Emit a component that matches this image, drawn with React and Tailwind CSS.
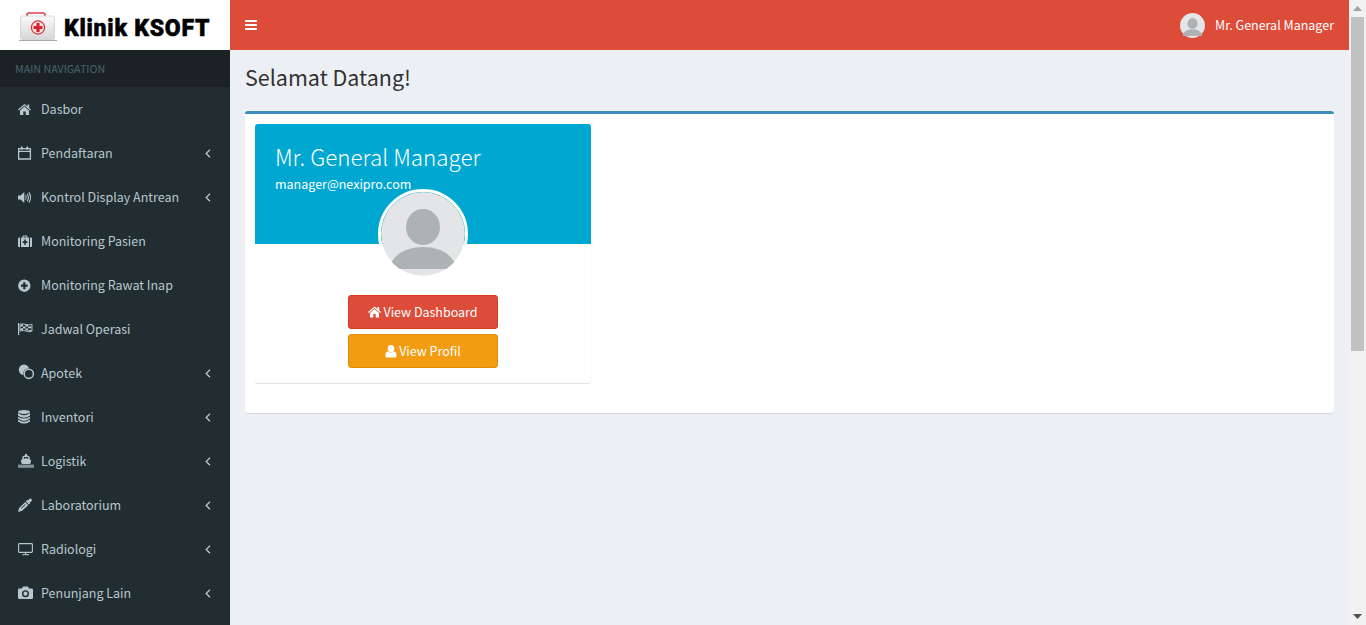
import React from "react";

const FONT = { fontFamily: '"Noto Sans CJK SC", "Noto Sans", sans-serif' };
const BG = "#222d32";

function Box({ children, w = 18, h = 18, className = "" }) {
  return (
    <svg viewBox={`0 0 ${w} ${h}`} width={w} height={h} className={`block ${className}`} fill="currentColor">
      {children}
    </svg>
  );
}

const HomeG = () => (
  <>
    <path d="M0 9.6 L6.5 4 L9.5 6.6 V4.6 H11.2 V8 L13 9.6 L12.2 10.5 L6.5 5.6 L0.8 10.5 Z" />
    <path d="M2 10.4 L6.5 6.6 L11 10.4 V15 H7.7 V11.6 H5.3 V15 H2 Z" />
  </>
);
const CalendarI = () => (
  <Box>
    <path d="M0.6 4.6 H12.4 V15 H0.6 Z M0.6 7.4 H12.4" fill="none" stroke="currentColor" strokeWidth="1.3" />
    <path d="M2.8 2.5 H4.6 V5.8 H2.8 Z M8.4 2.5 H10.2 V5.8 H8.4 Z" />
  </Box>
);
const VolumeI = () => (
  <Box>
    <path d="M0 7.5 H2.6 L6.3 4 V15 L2.6 11.5 H0 Z" />
    <path d="M7.6 7.3 Q9 9.5 7.6 11.7 M9.2 5.8 Q11.6 9.5 9.2 13.2 M10.9 4.4 Q14.2 9.5 10.9 14.6" fill="none" stroke="currentColor" strokeWidth="1.1" />
  </Box>
);
const MedkitI = () => (
  <Box>
    <path d="M0 6.5 Q0 5.5 1 5.5 H2 V15 H1 Q0 15 0 14 Z M12 5.5 H13 Q14 5.5 14 6.5 V14 Q14 15 13 15 H12 Z" />
    <path fillRule="evenodd" d="M3 5.5 H4.6 V4.2 Q4.6 3.4 5.4 3.4 H8.6 Q9.4 3.4 9.4 4.2 V5.5 H11 V15 H3 Z M5.6 5.5 H8.4 V4.4 H5.6 Z M6.2 7.6 V9.3 H4.6 V11 H6.2 V12.7 H7.8 V11 H9.4 V9.3 H7.8 V7.6 Z" />
  </Box>
);
const PlusCircleI = () => (
  <Box>
    <path fillRule="evenodd" d="M6.3 3.5 A6.2 6.2 0 1 1 6.3 15.9 A6.2 6.2 0 1 1 6.3 3.5 Z M5.2 6.2 V8.6 H3 V10.8 H5.2 V13.2 H7.4 V10.8 H9.6 V8.6 H7.4 V6.2 Z" />
  </Box>
);
const FlagI = () => (
  <Box>
    <rect x="0" y="3" width="1.2" height="12" />
    <path d="M2 4.3 Q5 3.2 8 4.6 Q11 5.6 14 4.3 V11.2 Q11 12.4 8 11 Q5 9.8 2 11.2 Z" fill="none" stroke="currentColor" strokeWidth="0.9" />
    <path d="M2.4 4.6 H5 V6.4 H2.4 Z M7.5 4.6 H10 V6.6 H7.5 Z M5 6.4 H7.5 V8.4 H5 Z M10 6.4 H13.6 V8.2 H10 Z M2.4 8.2 H5 V10.3 H2.4 Z M7.5 8.4 H10 V10.6 H7.5 Z M10.5 10 H13.6 V11 H10.5 Z" />
  </Box>
);
const PillsI = () => (
  <Box h={18}>
    <circle cx="6" cy="5.8" r="5.2" />
    <circle cx="10.8" cy="9.8" r="5.6" fill={BG} />
    <circle cx="10.8" cy="9.8" r="4.6" fill="none" stroke="currentColor" strokeWidth="1.5" />
  </Box>
);
const DatabaseI = () => (
  <Box>
    <ellipse cx="6" cy="3.9" rx="6" ry="2" />
    <path d="M0 5 Q3 7.2 6 7.2 Q9 7.2 12 5 V7.4 Q9 9.8 6 9.8 Q3 9.8 0 7.4 Z" />
    <path d="M0 8.4 Q3 10.6 6 10.6 Q9 10.6 12 8.4 V10.6 Q9 13 6 13 Q3 13 0 10.6 Z" />
    <path d="M0 11.6 Q3 13.8 6 13.8 Q9 13.8 12 11.6 V13.4 Q9 15.6 6 15.6 Q3 15.6 0 13.4 Z" />
  </Box>
);
const ShipI = () => (
  <Box>
    <path fillRule="evenodd" d="M7 2 H9 V3.4 Q11.8 3.6 11.8 6.4 V7.6 L13.2 8.6 L12.2 12 H3.8 L2.8 8.6 L4.2 7.6 V6.4 Q4.2 3.6 7 3.4 Z M5.8 5 V7 L8 6 L10.2 7 V5 Z" />
    <rect x="0" y="12.6" width="16" height="3.2" opacity="0.65" />
  </Box>
);
const DropperI = () => (
  <Box>
    <path d="M10 4.6 L11.2 3 Q12.4 1.8 13.5 3 Q14.6 4.2 13.2 5.4 L11.6 6.6 L12.2 7.4 L11 8.4 L7.8 5.2 L9 4 Z" />
    <path d="M7.2 5.9 L10.3 9 L4.4 14.6 Q3 15.6 2 15.2 L0.8 16 L0 15.2 L0.8 14 Q0.4 13 1.4 11.7 Z M7.2 8.1 L3 12.3 L3.5 12.8 L7.7 8.6 Z" fillRule="evenodd" />
  </Box>
);
const DesktopI = () => (
  <Box>
    <rect x="0.6" y="3.6" width="13.8" height="8.8" rx="0.8" fill="none" stroke="currentColor" strokeWidth="1.1" />
    <rect x="7" y="12.6" width="1.2" height="1.8" />
    <rect x="4.2" y="14.2" width="6.8" height="1" />
  </Box>
);
const CameraI = () => (
  <Box>
    <path fillRule="evenodd" d="M1.2 4.6 H4 L5 2.4 H10 L11 4.6 H13.8 Q15 4.6 15 5.8 V13.8 Q15 15 13.8 15 H1.2 Q0 15 0 13.8 V5.8 Q0 4.6 1.2 4.6 Z M7.5 6.2 A3.5 3.5 0 1 0 7.5 13.2 A3.5 3.5 0 1 0 7.5 6.2 Z M7.5 7.6 A2.1 2.1 0 1 1 7.5 11.8 A2.1 2.1 0 1 1 7.5 7.6 Z" />
  </Box>
);

const items = [
  { label: "Dasbor", Icon: () => <Box><HomeG /></Box> },
  { label: "Pendaftaran", Icon: CalendarI, more: true },
  { label: "Kontrol Display Antrean", Icon: VolumeI, more: true },
  { label: "Monitoring Pasien", Icon: MedkitI },
  { label: "Monitoring Rawat Inap", Icon: PlusCircleI },
  { label: "Jadwal Operasi", Icon: FlagI },
  { label: "Apotek", Icon: PillsI, more: true },
  { label: "Inventori", Icon: DatabaseI, more: true },
  { label: "Logistik", Icon: ShipI, more: true },
  { label: "Laboratorium", Icon: DropperI, more: true },
  { label: "Radiologi", Icon: DesktopI, more: true },
  { label: "Penunjang Lain", Icon: CameraI, more: true },
];

function Avatar({ className }) {
  return (
    <svg viewBox="0 0 84 84" className={className}>
      <circle cx="42" cy="42" r="42" fill="#e3e5e6" />
      <ellipse cx="42" cy="35" rx="17" ry="18" fill="#adb3b4" />
      <path d="M10 72 C15 60 28 55 42 55 C56 55 69 60 74 72 L74 77 L10 77 Z" fill="#adb3b4" />
    </svg>
  );
}

function LogoCase() {
  return (
    <svg viewBox="0 0 38 30" width="38" height="30" className="block shrink-0 mt-[4px]">
      <defs>
        <linearGradient id="caseGrad" x1="0" y1="0" x2="0" y2="1">
          <stop offset="0" stopColor="#fafafa" />
          <stop offset="1" stopColor="#d6d6d6" />
        </linearGradient>
      </defs>
      <path d="M8 5 V2.6 Q8 1 10 1 H24 Q26 1 26 2.6 V5" fill="none" stroke="#d9434a" strokeWidth="1.6" />
      <rect x="1.5" y="4" width="34" height="23.5" rx="2" fill="url(#caseGrad)" stroke="#cfcfcf" strokeWidth="0.8" />
      <circle cx="19" cy="15.5" r="6.6" fill="#f6e4e4" stroke="#d8303a" strokeWidth="1.2" />
      <path d="M17.4 11 h3.2 v2.9 h2.9 v3.2 h-2.9 v2.9 h-3.2 v-2.9 h-2.9 v-3.2 h2.9 z" fill="#d8232e" />
      <rect x="0" y="28" width="38" height="1" fill="#a8a8a8" />
    </svg>
  );
}

function Scrollbar() {
  return (
    <div className="w-[17px] h-full shrink-0 bg-[#f1f1f1] flex flex-col items-center">
      <div className="h-[17px] w-full flex items-center justify-center">
        <svg width="9" height="5" viewBox="0 0 9 5" fill="#a3a3a3"><path d="M4.5 0 L9 5 H0 Z" /></svg>
      </div>
      <div className="h-[334px] w-[13px] bg-[#c1c1c1]" />
      <div className="flex-1" />
      <div className="h-[17px] w-full flex items-center justify-center">
        <svg width="9" height="5" viewBox="0 0 9 5" fill="#505050"><path d="M0 0 H9 L4.5 5 Z" /></svg>
      </div>
    </div>
  );
}

export default function App() {
  return (
    <div className="h-screen flex overflow-hidden bg-[#ecf0f5] text-[12.5px] text-[#333]" style={FONT}>
      <div className="flex-1 min-w-0 flex flex-col">
        <header className="flex h-[50px] shrink-0">
          <div className="w-[230px] h-[50px] bg-white flex items-center pl-[19px] gap-[7px]">
            <LogoCase />
            <span className="text-[23px] font-black text-black tracking-[0.75px] leading-none mt-[7px] whitespace-nowrap" style={{ fontFamily: 'Roboto, sans-serif', WebkitTextStroke: "0.5px #000" }}>Klinik KSOFT</span>
          </div>
          <div className="flex-1 bg-[#dd4b39] flex items-center justify-between px-[15px] text-white">
            <svg width="12" height="12" viewBox="0 0 12 12" fill="currentColor" className="block"><rect y="1" width="12" height="2" rx="0.5" /><rect y="5" width="12" height="2" rx="0.5" /><rect y="9" width="12" height="2" rx="0.5" /></svg>
            <div className="flex items-center gap-[10px]">
              <Avatar className="w-[25px] h-[25px]" />
              <span>Mr. General Manager</span>
            </div>
          </div>
        </header>
        <div className="flex flex-1 min-h-0">
          <aside className="w-[230px] bg-[#222d32] shrink-0">
            <div className="h-[37px] bg-[#1a2226] text-[#4b646f] text-[10.7px] px-[15px] pt-[2px] flex items-center uppercase">Main Navigation</div>
            <ul>
              {items.map(({ label, Icon, more }) => (
                <li key={label} className="h-[44px] flex items-center text-[#b8c7ce] pl-[18px] pr-[19px]">
                  <span className="w-[23px] shrink-0"><Icon /></span>
                  <span className="flex-1">{label}</span>
                  {more && (
                    <svg width="6" height="9" viewBox="0 0 6 9" fill="none" stroke="currentColor" strokeWidth="1.3" className="block"><path d="M5 0.8 L1.2 4.5 L5 8.2" /></svg>
                  )}
                </li>
              ))}
            </ul>
          </aside>
          <main className="flex-1 min-w-0 px-[15px] pt-[14px]">
            <h1 className="text-[21.5px] leading-[26px] font-normal text-[#333]">Selamat Datang!</h1>
            <section className="mt-[21px] bg-white border-t-[3px] border-[#3c8dbc] rounded-[3px] shadow-[0_1px_1px_rgba(0,0,0,0.1)] p-[10px] h-[302px]">
              <div className="w-[336px] h-[259px] rounded-[3px] shadow-[0_1px_1px_rgba(0,0,0,0.125)] relative">
                <div className="h-[120px] bg-[#00a7d0] rounded-t-[3px] px-[20px] pt-[19px] text-white">
                  <h3 className="text-[22.4px] font-light leading-[27px]">Mr. General Manager</h3>
                  <h5 className="text-[12.5px] font-normal leading-[16px] mt-[6px]">manager@nexipro.com</h5>
                </div>
                <div className="absolute left-[123px] top-[65px] w-[90px] h-[90px] rounded-full border-[3px] border-white overflow-hidden">
                  <Avatar className="w-full h-full" />
                </div>
                <div className="pt-[51px] flex flex-col items-center gap-[5px]">
                  <button className="w-[150px] h-[34px] rounded-[3px] bg-[#dd4b39] border border-[#d73925] text-white flex items-center justify-center gap-[2px]">
                    <svg width="13" height="12" viewBox="0 3.5 13 12" fill="currentColor" className="block"><HomeG /></svg>
                    View Dashboard
                  </button>
                  <button className="w-[150px] h-[34px] rounded-[3px] bg-[#f39c12] border border-[#e08e0b] text-white flex items-center justify-center gap-[2px]">
                    <svg width="12" height="13" viewBox="0 0 12 13" fill="currentColor" className="block"><ellipse cx="6" cy="3.6" rx="3.3" ry="3.6" /><path d="M0.5 10 Q0.5 6.6 3 6.6 Q6 8.6 9 6.6 Q11.5 6.6 11.5 10 V11 Q11.5 12.6 10 12.6 H2 Q0.5 12.6 0.5 11 Z" /></svg>
                    View Profil
                  </button>
                </div>
              </div>
            </section>
          </main>
        </div>
      </div>
      <Scrollbar />
    </div>
  );
}
